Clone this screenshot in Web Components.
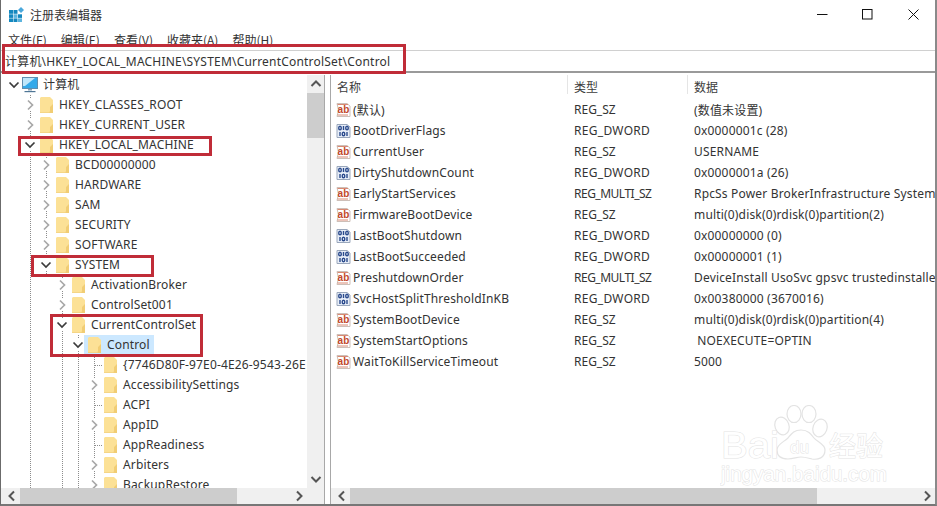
<!DOCTYPE html>
<html>
<head>
<meta charset="utf-8">
<style>
    html, body { margin: 0; padding: 0; background: #fff; overflow: hidden; }
    body { width: 937px; height: 506px; font-family: "Noto Sans", "Noto Sans CJK SC", sans-serif; }
</style>
</head>
<body>
<reg-window>
    <reg-tree slot="tree">
        <tree-row level="0" state="open" icon="pc">计算机</tree-row>
        <tree-row level="1" state="closed" guides="30">HKEY_CLASSES_ROOT</tree-row>
        <tree-row level="1" state="closed" guides="30">HKEY_CURRENT_USER</tree-row>
        <tree-row level="1" state="open" guides="30">HKEY_LOCAL_MACHINE</tree-row>
        <tree-row level="2" state="closed" guides="30 46">BCD00000000</tree-row>
        <tree-row level="2" state="closed" guides="30 46">HARDWARE</tree-row>
        <tree-row level="2" state="closed" guides="30 46">SAM</tree-row>
        <tree-row level="2" state="closed" guides="30 46">SECURITY</tree-row>
        <tree-row level="2" state="closed" guides="30 46">SOFTWARE</tree-row>
        <tree-row level="2" state="open" guides="30 46">SYSTEM</tree-row>
        <tree-row level="3" state="closed" guides="30 62">ActivationBroker</tree-row>
        <tree-row level="3" state="closed" guides="30 62">ControlSet001</tree-row>
        <tree-row level="3" state="open" guides="30 62">CurrentControlSet</tree-row>
        <tree-row level="4" state="open" guides="30 62 78" selected>Control</tree-row>
        <tree-row level="5" state="leaf" guides="30 62 78 94">{7746D80F-97E0-4E26-9543-26E</tree-row>
        <tree-row level="5" state="closed" guides="30 62 78 94">AccessibilitySettings</tree-row>
        <tree-row level="5" state="leaf" guides="30 62 78 94">ACPI</tree-row>
        <tree-row level="5" state="closed" guides="30 62 78 94">AppID</tree-row>
        <tree-row level="5" state="leaf" guides="30 62 78 94">AppReadiness</tree-row>
        <tree-row level="5" state="closed" guides="30 62 78 94">Arbiters</tree-row>
        <tree-row level="5" state="closed" guides="30 62 78 94">BackupRestore</tree-row>
    </reg-tree>
    <reg-list slot="list">
        <value-row kind="sz" type="REG_SZ" data="(数值未设置)">(默认)</value-row>
        <value-row kind="bin" type="REG_DWORD" data="0x0000001c (28)">BootDriverFlags</value-row>
        <value-row kind="sz" type="REG_SZ" data="USERNAME">CurrentUser</value-row>
        <value-row kind="bin" type="REG_DWORD" data="0x0000001a (26)">DirtyShutdownCount</value-row>
        <value-row kind="sz" type="REG_MULTI_SZ" data="RpcSs Power BrokerInfrastructure System">EarlyStartServices</value-row>
        <value-row kind="sz" type="REG_SZ" data="multi(0)disk(0)rdisk(0)partition(2)">FirmwareBootDevice</value-row>
        <value-row kind="bin" type="REG_DWORD" data="0x00000000 (0)">LastBootShutdown</value-row>
        <value-row kind="bin" type="REG_DWORD" data="0x00000001 (1)">LastBootSucceeded</value-row>
        <value-row kind="sz" type="REG_MULTI_SZ" data="DeviceInstall UsoSvc gpsvc trustedinstalle">PreshutdownOrder</value-row>
        <value-row kind="bin" type="REG_DWORD" data="0x00380000 (3670016)">SvcHostSplitThresholdInKB</value-row>
        <value-row kind="sz" type="REG_SZ" data="multi(0)disk(0)rdisk(0)partition(4)">SystemBootDevice</value-row>
        <value-row kind="sz" type="REG_SZ" data=" NOEXECUTE=OPTIN">SystemStartOptions</value-row>
        <value-row kind="sz" type="REG_SZ" data="5000">WaitToKillServiceTimeout</value-row>
    </reg-list>
</reg-window>

<script>
const chevrons = {
    closed: '<svg width="16" height="12" viewBox="0 0 16 12"><path d="M6 1.5 10.5 6 6 10.5" fill="none" stroke="#a8a8a8" stroke-width="1.7"/></svg>',
    open: '<svg width="16" height="12" viewBox="0 0 16 12"><path d="M3.5 3.5 8 8 12.5 3.5" fill="none" stroke="#3c3c3c" stroke-width="1.7"/></svg>'
};

const folderIcon = `<svg width="14" height="16" viewBox="0 0 14 16">
    <path d="M1 0H10L13 3V16H0V1Z" fill="#fce196"/>
    <path d="M10 10 13 7V16H9L10 14Z" fill="#f1cd74"/>
    <path d="M0 15H9V16H0Z" fill="#f5d585"/>
</svg>`;

const pcIcon = `<svg width="17" height="16" viewBox="0 0 17 16">
    <rect x="0.5" y="0.5" width="15" height="11" fill="#35aaea" stroke="#5f8fb0"/>
    <path d="M1 1H13L3 9H1Z" fill="#bfe7fb"/>
    <path d="M6 12h4v1.5H6z" fill="#8aa2b6"/>
    <path d="M2.5 14h11v1.2h-11z" fill="#4f7696"/>
</svg>`;

const szIcon = `<svg width="15" height="16" viewBox="0 0 15 16">
    <path d="M1 1.5H11L14 4V14.5H1L2.5 8Z" fill="#fff" stroke="#cdbfb8"/>
    <path d="M1.5 2.5H12M1.5 13H12" stroke="#d98a74"/>
    <text x="7.5" y="11" font-family="Liberation Sans" font-weight="700" font-size="10" text-anchor="middle" fill="#c2482a">ab</text>
</svg>`;

const binIcon = `<svg width="15" height="16" viewBox="0 0 15 16">
    <path d="M1 1.5H11L14 4V14.5H1Z" fill="#e8eef8" stroke="#9aa7bb"/>
    <g fill="none" stroke="#2a4a8c" stroke-width="1.4">
        <ellipse cx="4" cy="5" rx="1.3" ry="1.8"/><path d="M7.5 3v4"/><ellipse cx="11" cy="5" rx="1.3" ry="1.8"/>
        <path d="M4 9v4"/><ellipse cx="7.5" cy="11" rx="1.3" ry="1.8"/><path d="M11 9v4"/>
    </g>
</svg>`;

class RegWindow extends HTMLElement {
    constructor() {
        super();
        this.attachShadow({ mode: 'open' });
        this.shadowRoot.innerHTML = `
            <style>
                :host {
                    display: flex;
                    flex-direction: column;
                    position: relative;
                    width: 937px;
                    height: 506px;
                    box-sizing: border-box;
                    border-left: 1px solid #6b6b6b;
                    border-right: 2px solid #8a8a8a;
                    border-bottom: 2px solid #777;
                    background: #fff;
                    color: #333;
                    font-size: 12px;
                    overflow: hidden;
                }
                .title {
                    height: 29px;
                    display: flex;
                    align-items: center;
                    padding: 0 0 0 8px;
                    flex: none;
                }
                .title .name { margin-left: 6px; font-family: "Noto Sans CJK SC", sans-serif; }
                .controls { margin-left: auto; margin-right: -1px; display: flex; }
                .controls span { width: 46px; height: 29px; display: flex; align-items: center; justify-content: center; }
                .controls span:first-child { width: 45px; padding-left: 1px; box-sizing: border-box; }
                .menu {
                    height: 21px;
                    display: flex;
                    gap: 14px;
                    padding: 0 0 0 7px;
                    flex: none;
                    align-items: center;
                    font-family: "Noto Sans CJK SC", sans-serif;
                }
                .address {
                    height: 23px;
                    box-sizing: border-box;
                    border-top: 1px solid #d0d0d0;
                    border-bottom: 2px solid #9a9a9a;
                    display: flex;
                    align-items: center;
                    padding: 0 0 0 4px;
                    flex: none;
                    white-space: nowrap;
                    letter-spacing: 0.2px;
                }
                .panes { flex: 1; display: flex; min-height: 0; padding-top: 2px; }
                ::slotted([slot="tree"]) { width: 324px; flex: none; }
                ::slotted([slot="list"]) { flex: 1; min-width: 0; margin-left: 5px; }
                .mark { position: absolute; border: 3px solid #c02c38; box-sizing: border-box; pointer-events: none; }
                .wm { position: absolute; left: 719px; top: 405px; pointer-events: none; }
            </style>
            <div class="title">
                <svg width="15" height="15" viewBox="0 0 15 15">
                    <g fill="#1488bf">
                        <rect x="0" y="3" width="4" height="3.8"/><rect x="4.5" y="3" width="4" height="3.8"/>
                        <rect x="0" y="7.3" width="4" height="3.6"/><rect x="4.5" y="7.3" width="4" height="3.6" fill="#5cb4de"/><rect x="9" y="7.3" width="4" height="3.6"/>
                        <rect x="0" y="11.4" width="4" height="3.6"/><rect x="4.5" y="11.4" width="4" height="3.6"/><rect x="9" y="11.4" width="4" height="3.6" fill="#5cb4de"/>
                    </g>
                    <path d="M12 0 15 3 12 6 9 3Z" fill="#4aa8dc"/>
                </svg>
                <span class="name">注册表编辑器</span>
                <div class="controls">
                    <span><svg width="11" height="11"><path d="M0 5.5H10.5" stroke="#111"/></svg></span>
                    <span><svg width="11" height="11"><rect x=".5" y=".5" width="9.5" height="9.5" fill="none" stroke="#111"/></svg></span>
                    <span><svg width="11" height="11"><path d="M.5.5 10.5 10.5M10.5.5.5 10.5" stroke="#111"/></svg></span>
                </div>
            </div>
            <div class="menu"><span>文件(F)</span><span>编辑(E)</span><span>查看(V)</span><span>收藏夹(A)</span><span>帮助(H)</span></div>
            <div class="address"><span>计算机\\HKEY_LOCAL_MACHINE\\SYSTEM\\CurrentControlSet\\Control</span></div>
            <div class="panes"><slot name="tree"></slot><slot name="list"></slot></div>

            <div class="mark" style="left:1px;top:44px;width:404px;height:30px"></div>
            <div class="mark" style="left:17px;top:136px;width:194px;height:20px"></div>
            <div class="mark" style="left:30px;top:255px;width:123px;height:22px"></div>
            <div class="mark" style="left:49px;top:314px;width:153px;height:43px"></div>

            <baidu-mark class="wm"></baidu-mark>
        `;
    }
}

class RegTree extends HTMLElement {
    constructor() {
        super();
        this.attachShadow({ mode: 'open' });
        this.shadowRoot.innerHTML = `
            <style>
                :host {
                    display: grid;
                    grid-template-columns: 1fr 17px;
                    grid-template-rows: 1fr 16px;
                    min-height: 0;
                    border-right: 1px solid #a8a8a8;
                    box-sizing: border-box;
                }
                .rows { overflow: hidden; min-width: 0; min-height: 0; letter-spacing: 0.15px; }
            </style>
            <div class="rows"><slot></slot></div>
            <reg-scroll axis="v" start="0" size="45"></reg-scroll>
            <reg-scroll axis="h" start="0" size="217"></reg-scroll>
            <reg-scroll axis="corner"></reg-scroll>
        `;
    }
}

class TreeRow extends HTMLElement {
    constructor() {
        super();
        this.attachShadow({ mode: 'open' });
        const level = +this.getAttribute('level');
        const state = this.getAttribute('state');
        const guides = (this.getAttribute('guides') || '').split(' ').filter(Boolean);
        const icon = this.getAttribute('icon') === 'pc' ? pcIcon : folderIcon;
        const bg = guides.map(x =>
            `repeating-linear-gradient(#8c8c8c 0 1px, transparent 1px 2px) ${x - 1}px 0 / 1px 100% no-repeat`
        ).join(',');
        this.shadowRoot.innerHTML = `
            <style>
                :host {
                    display: flex;
                    align-items: center;
                    height: 20px;
                    white-space: nowrap;
                    padding-left: ${5 + 16 * level}px;
                    background: ${bg || 'none'};
                }
                .exp { width: 16px; height: 12px; flex: none; display: flex; background: ${state === 'leaf' ? 'none' : '#fff'}; }
                .stub { width: 8px; margin: 6px 0 0 9px; height: 1px; background: repeating-linear-gradient(90deg, #8c8c8c 0 1px, transparent 1px 2px); }
                .main { display: flex; align-items: center; height: 20px; margin-left: ${level === 0 ? 0 : 2}px; }
                .main.sel { background: #cce8ff; margin-left: -2px; padding: 0 4px 0 4px; }
                .icon { display: flex; width: ${level === 0 ? 17 : 14}px; }
                .label { margin-left: ${level === 0 ? 4 : 5}px; padding-bottom: 2px; }
            </style>
            <span class="exp">${state === 'leaf' ? '<span class="stub"></span>' : chevrons[state]}</span>
            <span class="main ${this.hasAttribute('selected') ? 'sel' : ''}">
                <span class="icon">${icon}</span>
                <span class="label"><slot></slot></span>
            </span>
        `;
    }
}

class RegList extends HTMLElement {
    constructor() {
        super();
        this.attachShadow({ mode: 'open' });
        this.shadowRoot.innerHTML = `
            <style>
                :host {
                    display: grid;
                    grid-template-rows: 1fr 16px;
                    min-height: 0;
                    min-width: 0;
                    border-left: 1px solid #a8a8a8;
                    box-sizing: border-box;
                }
                .view { overflow: hidden; min-height: 0; }
                .head { display: grid; grid-template-columns: 237px 120px 1fr; height: 24px; font-family: "Noto Sans CJK SC", sans-serif; color: #3c3c3c; }
                .head span { padding: 2px 0 0 6px; height: 17px; line-height: 20px; border-right: 1px solid #e5e5e5; }
                .head span:last-child { border: 0; }
            </style>
            <div class="view">
                <div class="head"><span>名称</span><span>类型</span><span>数据</span></div>
                <div><slot></slot></div>
            </div>
            <reg-scroll axis="h" start="0" size="467"></reg-scroll>
        `;
    }
}

// type names are a little off the reference's face, so each one gets its own tracking
const typeSpacing = { REG_SZ: 0, REG_DWORD: 0.3, REG_MULTI_SZ: -0.5 };

class ValueRow extends HTMLElement {
    constructor() {
        super();
        this.attachShadow({ mode: 'open' });
        const type = this.getAttribute('type');
        this.shadowRoot.innerHTML = `
            <style>
                :host {
                    display: grid;
                    grid-template-columns: 237px 120px 1fr;
                    height: 21px;
                    align-items: center;
                    white-space: nowrap;
                }
                .name { display: flex; align-items: center; padding-left: 5px; gap: 2px; letter-spacing: 0.15px; }
                .icon { display: flex; width: 15px; }
                .type { padding-left: 6px; letter-spacing: ${typeSpacing[type]}px; }
                .data { padding-left: 6px; white-space: pre; overflow: hidden; letter-spacing: 0.17px; }
            </style>
            <span class="name"><span class="icon">${this.getAttribute('kind') === 'bin' ? binIcon : szIcon}</span><span><slot></slot></span></span>
            <span class="type">${type}</span>
            <span class="data">${this.getAttribute('data')}</span>
        `;
    }
}

class RegScroll extends HTMLElement {
    constructor() {
        super();
        this.attachShadow({ mode: 'open' });
        const axis = this.getAttribute('axis');
        const size = this.getAttribute('size');
        const vertical = axis === 'v';
        const arrow = d => `<svg width="16" height="16" viewBox="0 0 16 16"><path d="${d}" fill="none" stroke="#555" stroke-width="2"/></svg>`;
        const up = 'M3.5 10 8 5.5 12.5 10', down = 'M3.5 6 8 10.5 12.5 6', left = 'M10 3.5 5.5 8 10 12.5', right = 'M6 3.5 10.5 8 6 12.5';
        this.shadowRoot.innerHTML = `
            <style>
                :host {
                    display: flex;
                    flex-direction: ${vertical ? 'column' : 'row'};
                    background: #f0f0f0;
                    min-width: 0;
                    min-height: 0;
                    padding-left: ${axis === 'h' ? 2 : 0}px;
                }
                .btn { flex: none; width: 17px; height: ${vertical ? '18px' : '16px'}; display: flex; align-items: center; justify-content: center; }
                .track { flex: 1; min-width: 0; min-height: 0; display: flex; flex-direction: ${vertical ? 'column' : 'row'}; }
                .thumb { background: #cdcdcd; flex: none; ${vertical ? `height:${size}px` : `width:${size}px`}; }
            </style>
            ${axis === 'corner' ? '' : `
                <span class="btn">${arrow(vertical ? up : left)}</span>
                <div class="track"><div class="thumb"></div></div>
                <span class="btn">${arrow(vertical ? down : right)}</span>
            `}
        `;
    }
}

class BaiduMark extends HTMLElement {
    constructor() {
        super();
        this.attachShadow({ mode: 'open' });
        const c = '#e3e3e3';
        this.shadowRoot.innerHTML = `
            <style>
                :host { display: block; width: 170px; height: 84px; }
                svg { display: block; }
            </style>
            <svg width="170" height="84" viewBox="0 0 170 84" fill="none" stroke="${c}" stroke-width="1.2">
                <ellipse cx="74" cy="9" rx="7" ry="8.5" fill="#fff"/>
                <ellipse cx="89" cy="9" rx="7" ry="8.5" fill="#fff"/>
                <ellipse cx="62" cy="21" rx="7" ry="9" fill="#fff" transform="rotate(-20 62 21)"/>
                <ellipse cx="100" cy="23" rx="7" ry="9" fill="#fff" transform="rotate(20 100 23)"/>
                <path d="M68 54c-6 0-11-2-11-9 0-6 7-8 11-12 4-5 6-8 13-8s10 4 13 8c3 4 11 6 11 12 0 8-7 10-13 9-4-1-7-2-11-2s-8 2-13 2Z" fill="#fff"/>
                <g font-family="Liberation Sans" style="paint-order:stroke" stroke-width="1">
                    <text x="1" y="53" font-size="36" fill="#fff" textLength="58" lengthAdjust="spacingAndGlyphs">Bai</text>
                    <text x="70" y="48" font-size="17" fill="#fff">du</text>
                    <text x="109" y="51" font-size="27" font-family="Noto Sans CJK SC" fill="#fff">经验</text>
                    <text x="1" y="76" font-size="20" fill="#fff" textLength="166" lengthAdjust="spacingAndGlyphs">jingyan.baidu.com</text>
                </g>
            </svg>
        `;
    }
}

customElements.define('reg-window', RegWindow);
customElements.define('reg-tree', RegTree);
customElements.define('tree-row', TreeRow);
customElements.define('reg-list', RegList);
customElements.define('value-row', ValueRow);
customElements.define('reg-scroll', RegScroll);
customElements.define('baidu-mark', BaiduMark);
</script>
</body>
</html>
